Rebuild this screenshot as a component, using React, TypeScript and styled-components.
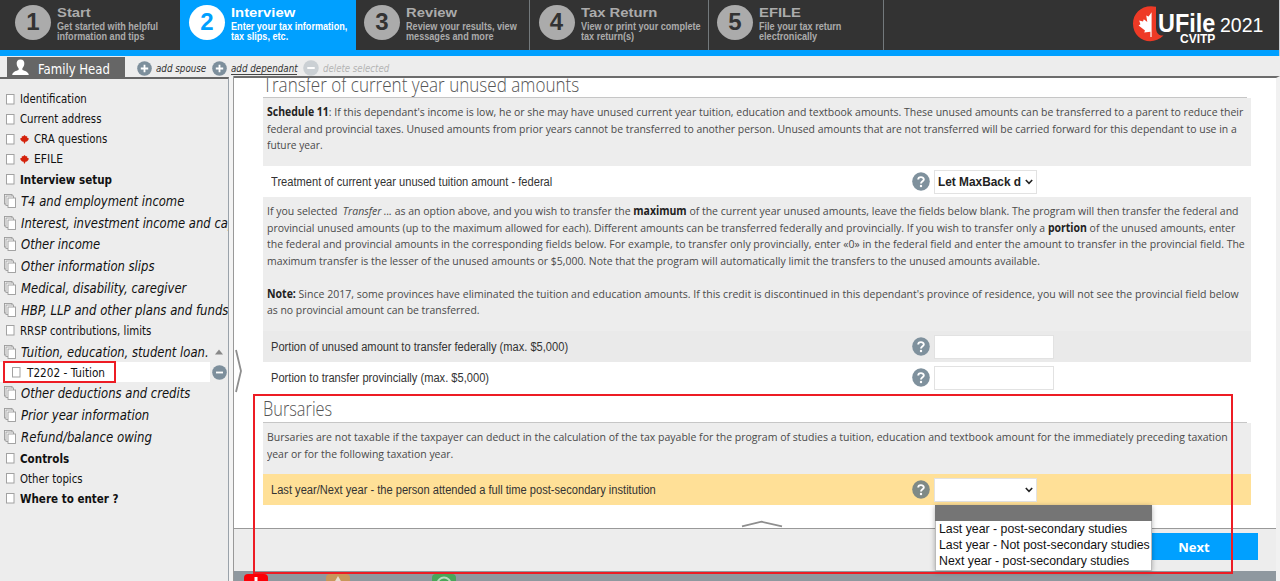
import React from "react";
import styled, { createGlobalStyle, css } from "styled-components";

const Global = createGlobalStyle`
  * { box-sizing: border-box; }
  body { margin: 0; background: #fff; overflow: hidden; }
`;

const arial = `"Liberation Sans", Arial, sans-serif`;
const tahoma = `"DejaVu Sans Condensed", Tahoma, sans-serif`;
const segoe = `"Open Sans", "Segoe UI", sans-serif`;

/* Text set on a slightly narrower (or wider) horizontal scale. */
const Fit = styled.span<{ $sx: number }>`
  display: inline-block;
  white-space: pre;
  transform: scaleX(${(p) => p.$sx});
  transform-origin: 0 50%;
`;

const Page = styled.div`
  position: relative;
  display: flex;
  flex-direction: column;
  width: 1280px;
  height: 581px;
  overflow: hidden;
  background: #ededed;
  font-family: ${arial};
`;

/* ---------- header ---------- */
const Header = styled.header`
  display: flex;
  height: 56px;
  flex: none;
  background: linear-gradient(#333 50px, #00a0ff 50px);
  border-right: 1px solid #c9ccd0;
`;

const Step = styled.div<{ $w: number; $pad: number; $active?: boolean; $line?: boolean }>`
  display: flex;
  flex: none;
  width: ${(p) => p.$w}px;
  height: 50px;
  padding: 5px 0 0 ${(p) => p.$pad}px;
  overflow: hidden;
  color: ${(p) => (p.$active ? "#fff" : "#ababab")};
  background: ${(p) => (p.$active ? "#00a0ff" : "#333")};
  border-right: ${(p) => (p.$line ? "1px solid #73797c" : "0")};
`;

const StepNumber = styled.div<{ $active?: boolean }>`
  flex: none;
  width: 36px;
  height: 35px;
  margin-right: 6px;
  border-radius: 50%;
  background: ${(p) => (p.$active ? "#fff" : "#ababab")};
  color: ${(p) => (p.$active ? "#00a0ff" : "#333")};
  font: bold 24px/34px ${arial};
  text-align: center;
`;

const StepText = styled.div`
  font: bold 10px/10px ${arial};
  & > * { display: block; }
`;

const StepTitle = styled(Fit)`
  font-size: 13px;
  line-height: 16px;
  margin-bottom: 1px;
`;

const Brand = styled.div`
  display: flex;
  margin: 6px 15px 0 auto;
  color: #fff;
`;

const BrandName = styled.div`
  width: 62px;
  margin-left: -6px;
  font: bold 26px/22px ${arial};
  padding-top: 6px;
  & > * { display: block; }
`;

const BrandSub = styled.div`
  font: bold 12px/10px ${arial};
  margin-left: 22px;
`;

const BrandYear = styled.div`
  width: 44px;
  font: 19.5px/20px ${arial};
  padding-top: 9px;
`;

/* ---------- toolbar ---------- */
const Toolbar = styled.div`
  display: flex;
  flex: none;
  height: 20px;
  background: #ededed;
`;

const PersonTab = styled.div`
  display: flex;
  width: 118px;
  height: 20px;
  margin: 1px 0 0 7px;
  padding-left: 5px;
  background: #666;
  color: #fff;
  font: 14px/24px ${tahoma};
  & > svg { margin: 2px 9px 0 0; flex: none; }
`;

const ToolAction = styled.div<{ $w: number; $indent?: number; $underline?: boolean; $off?: boolean }>`
  display: flex;
  flex: none;
  align-items: center;
  width: ${(p) => p.$w}px;
  height: 24px;
  padding-left: ${(p) => p.$indent ?? 0}px;
  color: ${(p) => (p.$off ? "#b4b4b4" : "#333")};
  font: italic 11px/15px ${tahoma};
  & > svg { margin-right: 4px; flex: none; }
  & > span { ${(p) => p.$underline && css`box-shadow: inset 0 -1px 0 #444; height: 14px;`} }
`;

/* ---------- body ---------- */
const Body = styled.div`
  display: flex;
  flex: 1;
  min-height: 0;
`;

const Sidebar = styled.nav`
  width: 229px;
  flex: none;
  padding-top: 10px;
  margin-top: 1px;
  border-top: 2px solid #666;
  border-right: 1px solid #9aa2aa;
  overflow: hidden;
  background: #ededed;
  color: #111;
`;

const NavRow = styled.div<{ $h: number; $kind: string }>`
  display: flex;
  align-items: center;
  height: ${(p) => p.$h}px;
  padding-left: ${(p) => (p.$kind === "group" ? 4 : p.$kind === "child" ? 12 : 6)}px;
  font: 12px/16px ${tahoma};
  & > svg { flex: none; margin-right: 5px; }
  ${(p) => p.$kind === "bold" && css`font-weight: bold;`}
  ${(p) => p.$kind === "group" && css`
    font-size: 14px;
    font-style: italic;
  `}
  ${(p) => p.$kind === "child" && css`
    padding-top: 1px;
    background: linear-gradient(90deg, #fff 210px, #ededed 210px);
    & > svg { margin-right: 6px; }
  `}
`;

const NavEnd = styled.span`
  position: absolute;
  left: 212px;
  display: flex;
`;

const ClipLabel = styled.span`
  width: 188px;
  overflow: hidden;
  white-space: nowrap;
`;

const Gutter = styled.div`
  width: 5px;
  flex: none;
  background: #f3f3f3;
  border-right: 1px solid #999;
`;

const Main = styled.main`
  display: flex;
  flex-direction: column;
  flex: 1;
  border-top: 2px solid #6c6c6c;
  border-right: 4px solid #f1f1f1;
  background: #fff;
`;

const Scroller = styled.div`
  height: 450px;
  padding-left: 29px;
  overflow: hidden;
  background: #fff;
`;

const SectionTitle = styled.h2<{ $h: number; $shift: number }>`
  display: flex;
  width: 984px;
  height: ${(p) => p.$h}px;
  margin: 0;
  border-bottom: 1px solid #c6c6c6;
  color: #555;
  font: 300 19.5px/26px ${segoe};
  & > span {
    height: 26px;
    margin-top: ${(p) => p.$shift}px;
  }
`;

const Note = styled.div<{ $h: number }>`
  width: 988px;
  height: ${(p) => p.$h}px;
  padding: 6px 0 0 4px;
  background: #ededed;
  color: #4a4a4a;
  font: 11.5px/16.5px ${segoe};
  b { color: #222; }
`;

const NoteLine = styled.div`
  height: 16.5px;
`;

const FieldRow = styled.div<{ $bg: string }>`
  display: flex;
  align-items: center;
  width: 988px;
  height: 31px;
  padding-left: 8px;
  background: ${(p) => p.$bg};
  color: #333;
  font: 12px/16px ${arial};
`;

const FieldLabel = styled.div`
  width: 641px;
  padding-top: 1px;
`;

const Field = styled.div<{ $w: number }>`
  display: flex;
  align-items: center;
  justify-content: space-between;
  width: ${(p) => p.$w}px;
  height: 24px;
  margin-left: 4px;
  padding: 0 3px;
  border: 1px solid #e2e2e2;
  background: #fff;
  font: bold 13px/18px ${arial};
  color: #222;
`;

const FieldValue = styled.span`
  width: 84px;
  & > * { vertical-align: top; }
`;

const Footer = styled.footer`
  display: flex;
  justify-content: flex-end;
  height: 43px;
  padding: 4px 18px 0 0;
  background: #ededed;
  border-top: 1px solid #999;
`;

const NextButton = styled.div`
  width: 128px;
  height: 27px;
  background: #00a0ff;
  color: #fff;
  font: bold 13px/28px ${segoe};
  text-align: center;
`;

const StatusBar = styled.div`
  display: flex;
  height: 10px;
  padding: 3px 0 0 10px;
  gap: 58px;
  background: #8f989f;
  overflow: hidden;
`;

const StatusBadge = styled.div<{ $bg: string; $gap?: number }>`
  width: 24px;
  height: 24px;
  flex: none;
  margin-right: ${(p) => p.$gap ?? 0}px;
  border-radius: 4px;
  background: ${(p) => p.$bg};
`;

/* ---------- layers over the page ---------- */
const Highlight = styled.div<{ $x: number; $y: number; $w: number; $h: number }>`
  position: absolute;
  left: ${(p) => p.$x}px;
  top: ${(p) => p.$y}px;
  width: ${(p) => p.$w}px;
  height: ${(p) => p.$h}px;
  border: 2px solid #ed1c24;
`;

const Handle = styled.svg<{ $x: number; $y: number }>`
  position: absolute;
  left: ${(p) => p.$x}px;
  top: ${(p) => p.$y}px;
  fill: none;
  stroke: #8e8e8e;
  stroke-width: 1.8;
`;

const Menu = styled.div`
  position: absolute;
  left: 935px;
  top: 505px;
  width: 217px;
  height: 66px;
  background: #fff;
  box-shadow: 0 1px 5px rgba(0, 0, 0, 0.3), inset 0 0 0 1px #bbb;
`;

const Option = styled.div<{ $selected?: boolean }>`
  height: ${(p) => (p.$selected ? 16.4 : 16)}px;
  padding-left: 4px;
  background: ${(p) => (p.$selected ? "#757575" : "transparent")};
  color: #111;
  font: 13px/16px ${arial};
`;

const Sheet = () => (
  <svg width="9" height="11" viewBox="0 0 9 11">
    <rect x="0.5" y="0.5" width="7.5" height="9.5" fill="#fff" stroke="#a2a2a2" />
  </svg>
);

const Stack = () => (
  <svg width="12" height="14" viewBox="0 0 12 14">
    <g fill="#fff" stroke="#9a9a9a" strokeWidth="0.9">
      <rect x="0.5" y="0.5" width="7.5" height="9.5" />
      <rect x="2" y="2" width="7.5" height="9.5" />
      <rect x="4" y="4" width="7.5" height="9.5" />
    </g>
  </svg>
);

const Leaf = () => (
  <svg width="9" height="9" viewBox="0 0 9 9">
    <path d="M4.5 0L5.8 1.2H7.2V2.7L8.9 3.5L8.3 5L6.9 6.4L5.4 6.8L5 8.4H4L3.6 6.8L2.1 6.4L0.7 5L0.1 3.5L1.8 2.7V1.2H3.2Z" fill="#d4220c" />
  </svg>
);

const RoundSign = ({ plus, color = "#7d8f9c", size = 15 }: { plus?: boolean; color?: string; size?: number }) => (
  <svg width={size} height={size} viewBox="0 0 15 15">
    <circle cx="7.5" cy="7.5" r="7.3" fill={color} />
    <path d={plus ? "M3.8 7.5H11.2M7.5 3.8V11.2" : "M4 7.5H11"} stroke="#fff" strokeWidth="1.8" />
  </svg>
);

const Help = ({ color = "#7f919d" }: { color?: string }) => (
  <svg width="18" height="19" viewBox="0 0 18 19">
    <ellipse cx="9" cy="9.5" rx="8.8" ry="9.2" fill={color} />
    <path d="M6.2 7.5C6.2 4.3 11.8 4.3 11.8 7.4C11.8 9.3 9 9.3 9 11.6" fill="none" stroke="#fff" strokeWidth="1.9" />
    <circle cx="9" cy="14" r="1.2" fill="#fff" />
  </svg>
);

const Caret = () => (
  <svg width="8" height="6" viewBox="0 0 8 6">
    <path d="M0.8 1L4 4.3L7.2 1" fill="none" stroke="#222" strokeWidth="1.6" />
  </svg>
);

const steps = [
  { n: 1, w: 180, pad: 15, title: "Start", a: "Get started with helpful", b: "information and tips" },
  { n: 2, w: 176, pad: 9, title: "Interview", a: "Enter your tax information,", b: "tax slips, etc.", active: true },
  { n: 3, w: 174, pad: 8, title: "Review", a: "Review your results, view", b: "messages and more", line: true },
  { n: 4, w: 179, pad: 8.5, title: "Tax Return", a: "View or print your complete", b: "tax return(s)", line: true },
  { n: 5, w: 175, pad: 8, title: "EFILE", a: "File your tax return", b: "electronically", line: true },
];

type Nav = { t: string; k: "plain" | "bold" | "group" | "child"; h: number; leaf?: boolean; open?: boolean; sx?: number };
const nav: Nav[] = [
  { t: "Identification", k: "plain", h: 20 },
  { t: "Current address", k: "plain", h: 20 },
  { t: "CRA questions", k: "plain", h: 20, leaf: true },
  { t: "EFILE", k: "plain", h: 20, leaf: true, sx: 1 },
  { t: "Interview setup", k: "bold", h: 21 },
  { t: "T4 and employment income", k: "group", h: 22 },
  { t: "Interest, investment income and capital gains", k: "group", h: 21.5 },
  { t: "Other income", k: "group", h: 21.5 },
  { t: "Other information slips", k: "group", h: 22 },
  { t: "Medical, disability, caregiver", k: "group", h: 22 },
  { t: "HBP, LLP and other plans and funds", k: "group", h: 21.5, sx: 0.93 },
  { t: "RRSP contributions, limits", k: "plain", h: 20.5 },
  { t: "Tuition, education, student loan.", k: "group", h: 21, open: true },
  { t: "T2202 - Tuition", k: "child", h: 20 },
  { t: "Other deductions and credits", k: "group", h: 22 },
  { t: "Prior year information", k: "group", h: 21.5, sx: 0.928 },
  { t: "Refund/balance owing", k: "group", h: 23, sx: 0.934 },
  { t: "Controls", k: "bold", h: 20 },
  { t: "Other topics", k: "plain", h: 20 },
  { t: "Where to enter ?", k: "bold", h: 20 },
];
const navScale = { plain: 0.944, bold: 0.962, group: 0.922, child: 0.974 };

export default function App() {
  return (
    <Page>
      <Global />
      <Header>
        {steps.map((s) => (
          <Step key={s.n} $w={s.w} $pad={s.pad} $active={s.active} $line={s.line}>
            <StepNumber $active={s.active}>{s.n}</StepNumber>
            <StepText>
              <StepTitle $sx={1.14}>{s.title}</StepTitle>
              <Fit $sx={0.91}>{s.a}</Fit>
              <Fit $sx={0.91}>{s.b}</Fit>
            </StepText>
          </Step>
        ))}
        <Brand>
          <svg width="31" height="36" viewBox="0 0 31 36">
            <path d="M23 0.8C10-2 0 6.5 0 17.7C0 34 19 41 30.5 29.5C25.5 30 23 27 23 21Z" fill="#ee3a26" />
            <path d="M18.6 6.2L15.6 10.6L13.2 9.4L14.3 16L10.8 13.2L10 15.4L6.2 14.6L7.4 18.2L5.6 19.4L12 24.6L11.2 26.6L17.4 25.7V31H18.6Z" fill="#fff" />
          </svg>
          <BrandName>
            <Fit $sx={0.9}>UFile</Fit>
            <BrandSub>CVITP</BrandSub>
          </BrandName>
          <BrandYear>2021</BrandYear>
        </Brand>
      </Header>

      <Toolbar>
        <PersonTab>
          <svg width="17" height="17" viewBox="0 0 17 17">
            <path d="M8.5 0.5C11.3 0.5 12.6 2.4 12.3 5C12.1 7 11.2 8.4 10.4 9.2V11C12.5 12 16.5 12.6 16.8 16H0.2C0.5 12.6 4.5 12 6.6 11V9.2C5.8 8.4 4.9 7 4.7 5C4.4 2.4 5.7 0.5 8.5 0.5Z" fill="#fff" />
          </svg>
          <Fit $sx={0.93}>Family Head</Fit>
        </PersonTab>
        <ToolAction $w={87} $indent={12}>
          <RoundSign plus />
          <Fit $sx={0.885}>add spouse</Fit>
        </ToolAction>
        <ToolAction $w={91} $underline>
          <RoundSign plus />
          <Fit $sx={0.885}>add dependant</Fit>
        </ToolAction>
        <ToolAction $w={100} $off>
          <RoundSign color="#cbd0d4" size={16} />
          <Fit $sx={0.87}>delete selected</Fit>
        </ToolAction>
      </Toolbar>

      <Body>
        <Sidebar>
          {nav.map((r) => (
            <NavRow key={r.t} $h={r.h} $kind={r.k}>
              {r.k === "group" ? <Stack /> : <Sheet />}
              {r.leaf && <Leaf />}
              {r.open ? (
                <ClipLabel>
                  <Fit $sx={navScale.group}>{r.t}</Fit>
                </ClipLabel>
              ) : (
                <Fit $sx={r.sx ?? navScale[r.k]}>{r.t}</Fit>
              )}
              {r.open && (
                <NavEnd>
                  <svg width="14" height="6" viewBox="0 0 14 6">
                    <path d="M7 0.5L11 5.5H3Z" fill="#888" />
                  </svg>
                </NavEnd>
              )}
              {r.k === "child" && (
                <NavEnd>
                  <RoundSign />
                </NavEnd>
              )}
            </NavRow>
          ))}
        </Sidebar>
        <Gutter />
        <Main>
          <Scroller>
            <SectionTitle $h={20} $shift={-6}>
              <Fit $sx={0.875}>Transfer of current year unused amounts</Fit>
            </SectionTitle>
            <Note $h={68}>
              <NoteLine>
                <Fit $sx={0.911}>
                  <b>Schedule 11</b>: If this dependant's income is low, he or she may have unused current year tuition, education and textbook amounts. These unused amounts can be transferred to a parent to reduce their
                </Fit>
              </NoteLine>
              <NoteLine>
                <Fit $sx={0.907}>federal and provincial taxes. Unused amounts from prior years cannot be transferred to another person. Unused amounts that are not transferred will be carried forward for this dependant to use in a</Fit>
              </NoteLine>
              <NoteLine>
                <Fit $sx={0.89}>future year.</Fit>
              </NoteLine>
            </Note>
            <FieldRow $bg="#fff">
              <FieldLabel>
                <Fit $sx={0.926}>Treatment of current year unused tuition amount - federal</Fit>
              </FieldLabel>
              <Help />
              <Field $w={103}>
                <FieldValue>
                  <Fit $sx={0.912}>Let MaxBack d</Fit>
                </FieldValue>
                <Caret />
              </Field>
            </FieldRow>
            <Note $h={134}>
              <NoteLine>
                <Fit $sx={0.912}>
                  If you selected  <i>Transfer ...</i> as an option above, and you wish to transfer the <b>maximum</b> of the current year unused amounts, leave the fields below blank. The program will then transfer the federal and
                </Fit>
              </NoteLine>
              <NoteLine>
                <Fit $sx={0.911}>
                  provincial unused amounts (up to the maximum allowed for each). Different amounts can be transferred federally and provincially. If you wish to transfer only a <b>portion</b> of the unused amounts, enter
                </Fit>
              </NoteLine>
              <NoteLine>
                <Fit $sx={0.913}>the federal and provincial amounts in the corresponding fields below. For example, to transfer only provincially, enter «0» in the federal field and enter the amount to transfer in the provincial field. The</Fit>
              </NoteLine>
              <NoteLine>
                <Fit $sx={0.909}>maximum transfer is the lesser of the unused amounts or $5,000. Note that the program will automatically limit the transfers to the unused amounts available.</Fit>
              </NoteLine>
              <NoteLine />
              <NoteLine>
                <Fit $sx={0.915}>
                  <b>Note:</b> Since 2017, some provinces have eliminated the tuition and education amounts. If this credit is discontinued in this dependant's province of residence, you will not see the provincial field below
                </Fit>
              </NoteLine>
              <NoteLine>
                <Fit $sx={0.907}>as no provincial amount can be transferred.</Fit>
              </NoteLine>
            </Note>
            <FieldRow $bg="#eaeaea">
              <FieldLabel>
                <Fit $sx={0.926}>Portion of unused amount to transfer federally (max. $5,000)</Fit>
              </FieldLabel>
              <Help />
              <Field $w={120} />
            </FieldRow>
            <FieldRow $bg="#fff">
              <FieldLabel>
                <Fit $sx={0.926}>Portion to transfer provincially (max. $5,000)</Fit>
              </FieldLabel>
              <Help />
              <Field $w={120} />
            </FieldRow>
            <SectionTitle $h={30} $shift={3}>
              <Fit $sx={0.838}>Bursaries</Fit>
            </SectionTitle>
            <Note $h={51}>
              <NoteLine>
                <Fit $sx={0.914}>Bursaries are not taxable if the taxpayer can deduct in the calculation of the tax payable for the program of studies a tuition, education and textbook amount for the immediately preceding taxation</Fit>
              </NoteLine>
              <NoteLine>
                <Fit $sx={0.91}>year or for the following taxation year.</Fit>
              </NoteLine>
            </Note>
            <FieldRow $bg="#ffe097">
              <FieldLabel>
                <Fit $sx={0.926}>Last year/Next year - the person attended a full time post-secondary institution</Fit>
              </FieldLabel>
              <Help color="#7f8a86" />
              <Field $w={103}>
                <FieldValue />
                <Caret />
              </Field>
            </FieldRow>
          </Scroller>
          <Footer>
            <NextButton>Next</NextButton>
          </Footer>
          <StatusBar>
            <StatusBadge $bg="#fb0007">
              <svg width="24" height="24" viewBox="0 0 24 24">
                <path d="M10.5 3H13.5V14H10.5Z" fill="#fff" />
              </svg>
            </StatusBadge>
            <StatusBadge $bg="#c8965a" $gap={24}>
              <svg width="24" height="24" viewBox="0 0 24 24">
                <path d="M12 2L19 14H5Z" fill="#e9dfd2" />
              </svg>
            </StatusBadge>
            <StatusBadge $bg="#4aa65a">
              <svg width="24" height="24" viewBox="0 0 24 24">
                <circle cx="12" cy="10" r="6.5" fill="none" stroke="#b9dcbf" strokeWidth="2" />
              </svg>
            </StatusBadge>
          </StatusBar>
        </Main>
      </Body>

      <Handle $x={234} $y={349} width="10" height="44" viewBox="0 0 10 44">
        <path d="M2 1L7 22L2 43" />
      </Handle>
      <Handle $x={740} $y={519} width="44" height="9" viewBox="0 0 44 9">
        <path d="M2 7.3L21.5 2.7L42 7.3" />
      </Handle>
      <Highlight $x={3} $y={361} $w={113} $h={22} />
      <Menu>
        <Option $selected />
        <Option>
          <Fit $sx={0.947}>Last year - post-secondary studies</Fit>
        </Option>
        <Option>
          <Fit $sx={0.947}>Last year - Not post-secondary studies</Fit>
        </Option>
        <Option>
          <Fit $sx={0.947}>Next year - post-secondary studies</Fit>
        </Option>
      </Menu>
      <Highlight $x={253} $y={394} $w={980} $h={180} />
    </Page>
  );
}
